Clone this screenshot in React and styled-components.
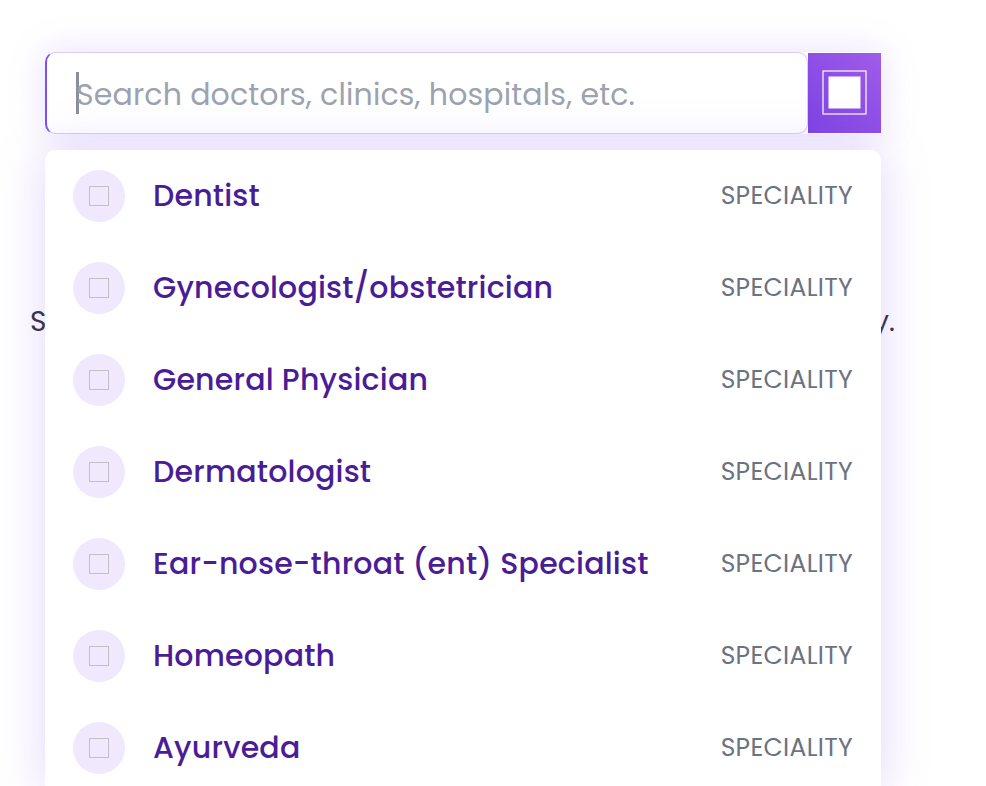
import styled, { createGlobalStyle } from 'styled-components';

const GlobalStyle = createGlobalStyle`
  html, body {
    margin: 0;
    padding: 0;
    background: #ffffff;
    font-family: "Poppins", Inter, "Noto Sans", sans-serif;
  }
`;

const specialities = [
    'Dentist',
    'Gynecologist/obstetrician',
    'General Physician',
    'Dermatologist',
    'Ear-nose-throat (ent) Specialist',
    'Homeopath',
    'Ayurveda',
];

const Page = styled.div`
    width: 986px;
    height: 786px;
    overflow: hidden;
    box-sizing: border-box;
    padding: 52px 0 0 30px;
`;

const SearchWrap = styled.div`
    position: relative;
    width: 836px;
    margin-left: 15px;
`;

const SearchBar = styled.div`
    display: flex;
    height: 82px;
    box-shadow: 0 0 36px rgba(150, 110, 240, 0.22);
    border-radius: 10px 0 0 10px;
`;

const InputBox = styled.div`
    flex: 1;
    display: flex;
    align-items: center;
    padding: 4px 0 0 29px;
    background: #ffffff;
    border: 1px solid #d9ccf7;
    border-left: 2px solid #7c4dff;
    border-radius: 10px;
    box-sizing: border-box;
`;

const Caret = styled.span`
    width: 3px;
    height: 42px;
    margin-top: -4px;
    background: #8a8f99;
    margin-right: -3px;
`;

const Placeholder = styled.span`
    font-size: 30px;
    letter-spacing: 0.15px;
    color: #9ca3af;
`;

const SearchButton = styled.button`
    width: 73px;
    height: 80px;
    margin-top: 1px;
    border: none;
    padding: 0;
    background: linear-gradient(45deg, #7c42e3 0%, #a15ce9 100%);
    display: flex;
    align-items: center;
    justify-content: center;
`;

const Behind = styled.p`
    margin: 0;
    margin-top: 171px;
    width: 865px;
    font-size: 28px;
    line-height: 34px;
    color: #2e2d3d;
    text-align: justify;
    text-align-last: justify;
    white-space: nowrap;
`;

const Dropdown = styled.ul`
    position: absolute;
    top: 98px;
    left: 0;
    width: 836px;
    margin: 0;
    padding: 0;
    list-style: none;
    background: #ffffff;
    border-radius: 10px;
    box-shadow: 0 0 48px rgba(150, 110, 240, 0.28);
`;

const Row = styled.li`
    display: flex;
    align-items: center;
    height: 92px;
    padding: 0 28px 0 28px;
`;

const IconCircle = styled.span`
    width: 52px;
    height: 52px;
    border-radius: 50%;
    background: #f0e8fc;
    display: flex;
    align-items: center;
    justify-content: center;
    flex-shrink: 0;
`;

const Box = styled.span`
    width: 18px;
    height: 18px;
    border: 1px solid #c4c0c8;
`;

const Name = styled.span`
    flex: 1;
    margin-left: 28px;
    font-size: 30px;
    letter-spacing: 0.2px;
    font-weight: 500;
    color: #4a1d96;
`;

const Tag = styled.span`
    font-size: 25px;
    letter-spacing: 0.3px;
    color: #6b7280;
`;

const SearchIcon = () => (
    <svg width="46" height="46" viewBox="0 0 46 46">
        <rect x="1" y="1" width="43" height="43" fill="none" stroke="#fff" strokeWidth="1.2" />
        <rect x="6.5" y="6.5" width="32" height="32" fill="#fff" />
    </svg>
);

const App = () => {
    return (
        <>
            <GlobalStyle />
            <Page>
                <SearchWrap>
                    <SearchBar>
                        <InputBox>
                            <Caret />
                            <Placeholder>Search doctors, clinics, hospitals, etc.</Placeholder>
                        </InputBox>
                        <SearchButton aria-label="search">
                            <SearchIcon />
                        </SearchButton>
                    </SearchBar>
                    <Dropdown>
                        {specialities.map((s) => (
                            <Row key={s}>
                                <IconCircle>
                                    <Box />
                                </IconCircle>
                                <Name>{s}</Name>
                                <Tag>SPECIALITY</Tag>
                            </Row>
                        ))}
                    </Dropdown>
                </SearchWrap>
                <Behind>Search for doctors, clinics and hospitals near you easily.</Behind>
            </Page>
        </>
    );
};

export default App;
